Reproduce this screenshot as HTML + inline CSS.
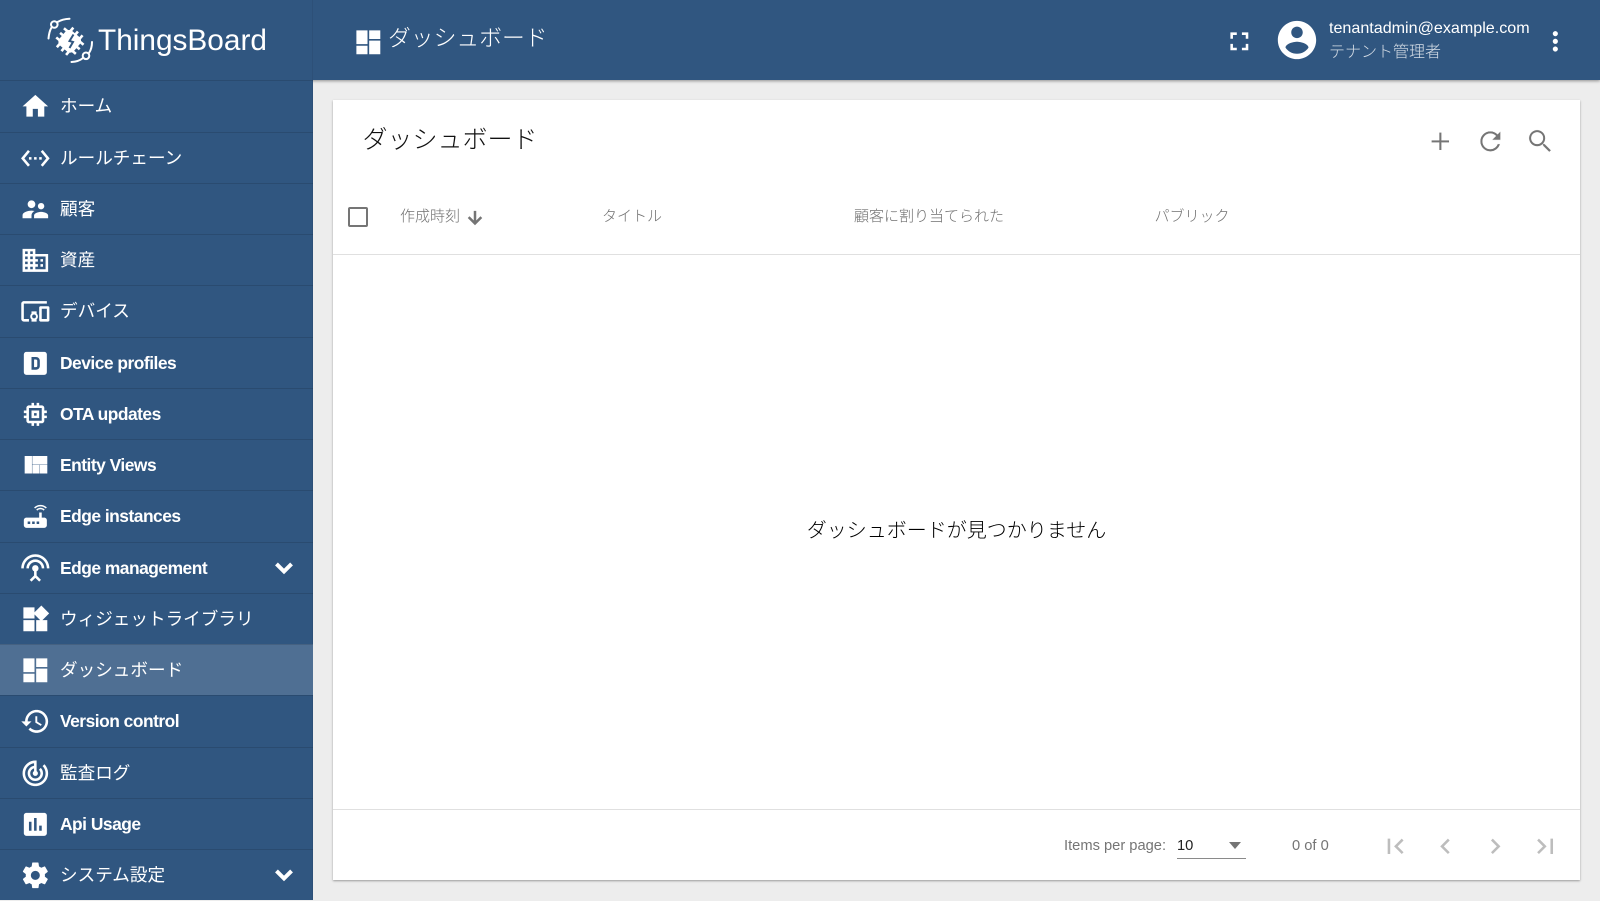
<!DOCTYPE html>
<html lang="ja">
<head>
<meta charset="utf-8">
<title>ダッシュボード</title>
<style>
html,body{margin:0;padding:0;width:1600px;height:900px;overflow:hidden;background:#ededed;font-family:"Liberation Sans","Noto Sans CJK JP",sans-serif;font-weight:300;}
*{box-sizing:border-box;}
svg{display:block;fill:currentColor;}
.abs{position:absolute;}
#top{position:absolute;left:0;top:0;width:1600px;height:80px;background:#305680;box-shadow:0 1px 3px rgba(0,0,0,.4);color:#fff;}
#side{position:absolute;left:0;top:0;width:313px;height:900px;background:#305680;color:#fff;border-right:1px solid rgba(0,0,0,.06);}
.row{position:absolute;left:0;width:313px;height:51px;border-top:1px solid rgba(0,0,0,.12);}
.row svg{position:absolute;left:19.6px;top:10px;width:30.7px;height:30.7px;}
.row span{position:absolute;left:60px;top:0;line-height:51px;font-size:17.6px;white-space:nowrap;font-weight:400;}
.row span.b{font-weight:700;font-size:17.4px;letter-spacing:-.5px;line-height:50.5px;}
.row svg.ch{left:268px;top:9px;width:32px;height:32px;stroke:#fff;stroke-width:1;}
.row svg.f{stroke:#fff;stroke-width:.7;}
.sel{background:#4f6f93;}
#card{position:absolute;left:333px;top:100px;width:1247px;height:780px;background:#fff;box-shadow:0 1px 2px rgba(0,0,0,.35);}
.th{position:absolute;top:207px;line-height:20px;font-size:15px;color:#707070;white-space:nowrap;}
.ic{position:absolute;width:30.7px;height:30.7px;color:#757575;stroke:#fff;stroke-width:.4;}
.pg{position:absolute;top:830.5px;width:30.7px;height:30.7px;color:#bdbdbd;}
</style>
</head>
<body>
<div id="top">
  <svg class="abs" style="left:352.500px;top:27px;width:30.7px;height:30.7px;stroke:#fff;stroke-width:.7" viewBox="0 0 24 24"><path d="M3 13h8V3H3v10zm0 8h8v-6H3v6zm10 0h8V11h-8v10zm0-18v6h8V3h-8z"/></svg>
  <div class="abs" style="left:388px;top:20px;line-height:36px;font-size:22.8px;white-space:nowrap">ダッシュボード</div>
  <svg class="abs" style="left:1224px;top:25.5px;width:30.7px;height:30.7px" viewBox="0 0 24 24"><path d="M7 14H5v5h5v-2H7v-3zm-2-4h2V7h3V5H5v5zm12 7h-3v2h5v-5h-2v3zM14 5v2h3v3h2V5h-5z"/></svg>
  <svg class="abs" style="left:1273.500px;top:17px;width:46px;height:46px" viewBox="0 0 24 24"><path d="M12 2C6.480 2 2 6.480 2 12s4.480 10 10 10 10-4.480 10-10S17.520 2 12 2zm0 3c1.660 0 3 1.340 3 3s-1.340 3-3 3-3-1.340-3-3 1.340-3 3-3zm0 14.200c-2.500 0-4.710-1.280-6-3.220.03-1.990 4-3.080 6-3.080 1.990 0 5.970 1.090 6 3.080-1.290 1.940-3.500 3.220-6 3.220z"/></svg>
  <div class="abs" style="left:1329px;top:17px;line-height:22px;font-size:16.1px;white-space:nowrap;color:#fff">tenantadmin@example.com</div>
  <div class="abs" style="left:1329px;top:41.5px;line-height:22px;font-size:16px;white-space:nowrap;color:rgba(255,255,255,.8)">テナント管理者</div>
  <svg class="abs" style="left:1540px;top:25.5px;width:30.7px;height:30.7px" viewBox="0 0 24 24"><path d="M12 8c1.100 0 2-.9 2-2s-.9-2-2-2-2 .9-2 2 .9 2 2 2zm0 2c-1.100 0-2 .9-2 2s.9 2 2 2 2-.9 2-2-.9-2-2-2zm0 6c-1.100 0-2 .9-2 2s.9 2 2 2 2-.9 2-2-.9-2-2-2z"/></svg>
</div>

<div id="side">
  <svg class="abs" style="left:46px;top:16px;width:48px;height:48px" viewBox="46 16 48 48">
    <g fill="none" stroke="#fff" stroke-width="2" stroke-linecap="round">
      <path d="M48.500 38.500C49 33 50 30 51.500 27.500"/><path d="M57.500 22C61 20 65 19 69.500 18.800"/><circle cx="54.300" cy="24.500" r="3.300"/>
      <path d="M92 42C92 47 91 50 89 53"/><path d="M83 58C80 60.500 76 61.800 71.500 62"/><circle cx="86" cy="55.800" r="3.300"/>
    </g>
    <g transform="rotate(40 69.700 41.300)" fill="#fff">
      <rect x="60.200" y="31.800" width="19" height="19" rx="5"/>
      <rect x="62.400" y="28.500" width="2.600" height="25.600"/><rect x="68.400" y="28.500" width="2.600" height="25.600"/><rect x="74.400" y="28.500" width="2.600" height="25.600"/>
      <rect x="56.900" y="33.700" width="25.600" height="2.600"/><rect x="56.900" y="39.700" width="25.600" height="2.600"/><rect x="56.900" y="45.700" width="25.600" height="2.600"/>
    </g>
    <path d="M73.500 34.500L69.500 41L73 42L69.500 48" fill="none" stroke="#305680" stroke-width="2"/>
  </svg>
  <div class="abs" style="left:98px;top:21px;line-height:40px;font-size:29.8px;white-space:nowrap">ThingsBoard</div>

  <div class="row" style="top:80px"><svg viewBox="0 0 24 24"><path d="M10 20v-6h4v6h5v-8h3L12 3 2 12h3v8z"/></svg><span>ホーム</span></div>
  <div class="row" style="top:132px"><svg viewBox="0 0 24 24"><path d="M7.770 6.760L6.230 5.480.82 12l5.410 6.520 1.540-1.280L3.420 12l4.350-5.240zM7 13h2v-2H7v2zm10-2h-2v2h2v-2zm-6 2h2v-2h-2v2zm6.770-7.520l-1.540 1.280L20.580 12l-4.350 5.240 1.540 1.280L23.180 12l-5.410-6.520z"/></svg><span>ルールチェーン</span></div>
  <div class="row" style="top:183px"><svg viewBox="0 0 24 24"><path d="M16.500 12c1.380 0 2.490-1.120 2.490-2.500S17.880 7 16.500 7C15.120 7 14 8.120 14 9.500s1.120 2.500 2.500 2.500zM9 11c1.660 0 2.990-1.340 2.990-3S10.660 5 9 5C7.340 5 6 6.340 6 8s1.340 3 3 3zm7.500 3c-1.830 0-5.500.92-5.500 2.750V19h11v-2.250c0-1.830-3.670-2.750-5.500-2.750zM9 13c-2.330 0-7 1.170-7 3.500V19h7v-2.250c0-.85.33-2.340 2.370-3.470C10.500 13.100 9.660 13 9 13z"/></svg><span>顧客</span></div>
  <div class="row" style="top:234px"><svg viewBox="0 0 24 24"><path d="M12 7V3H2v18h20V7H12zM6 19H4v-2h2v2zm0-4H4v-2h2v2zm0-4H4V9h2v2zm0-4H4V5h2v2zm4 12H8v-2h2v2zm0-4H8v-2h2v2zm0-4H8V9h2v2zm0-4H8V5h2v2zm10 12h-8v-2h2v-2h-2v-2h2v-2h-2V9h8v10zm-2-8h-2v2h2v-2zm0 4h-2v2h2v-2z"/></svg><span>資産</span></div>
  <div class="row" style="top:285px"><svg viewBox="0 0 24 24"><path d="M3 6h18V4H3c-1.100 0-2 .9-2 2v12c0 1.100.9 2 2 2h4v-2H3V6zm10 6H9v1.780c-.61.55-1 1.330-1 2.220s.39 1.670 1 2.220V20h4v-1.780c.61-.55 1-1.340 1-2.220s-.39-1.670-1-2.220V12zm-2 5.500c-.83 0-1.500-.67-1.500-1.500s.67-1.500 1.500-1.500 1.500.67 1.500 1.500-.67 1.500-1.500 1.500zM22 8h-6c-.5 0-1 .5-1 1v10c0 .5.5 1 1 1h6c.5 0 1-.5 1-1V9c0-.5-.5-1-1-1zm-1 10h-4v-8h4v8z"/></svg><span>デバイス</span></div>
  <div class="row" style="top:337px"><svg viewBox="0 0 24 24"><path fill-rule="evenodd" d="M5 3h14a2 2 0 0 1 2 2v14a2 2 0 0 1-2 2H5a2 2 0 0 1-2-2V5a2 2 0 0 1 2-2zm4 4v10h3.500c1.700 0 3-1.300 3-3v-4c0-1.700-1.300-3-3-3H9zm2 2h1.500c.5 0 1 .4 1 .9v4.200c0 .5-.5.9-1 .9H11V9z"/></svg><span class="b">Device profiles</span></div>
  <div class="row" style="top:388px"><svg viewBox="0 0 24 24"><path d="M15 9H9v6h6V9zm-2 4h-2v-2h2v2zm8-2V9h-2V7c0-1.100-.9-2-2-2h-2V3h-2v2h-2V3H9v2H7c-1.100 0-2 .9-2 2v2H3v2h2v2H3v2h2v2c0 1.100.9 2 2 2h2v2h2v-2h2v2h2v-2h2c1.100 0 2-.9 2-2v-2h2v-2h-2v-2h2zm-4 6H7V7h10v10z"/></svg><span class="b">OTA updates</span></div>
  <div class="row" style="top:439px"><svg class="f" viewBox="0 0 24 24"><path d="M10 18h5v-6h-5v6zm-6 0h5V5H4v13zm12 0h5v-6h-5v6zM10 5v6h11V5H10z"/></svg><span class="b">Entity Views</span></div>
  <div class="row" style="top:490px"><svg viewBox="0 0 24 24"><path d="M20.200 5.900l.8-.8C19.600 3.700 17.800 3 16 3s-3.600.7-5 2.100l.8.8C13 4.800 14.500 4.200 16 4.200s3 .6 4.200 1.700zm-.9.8c-.9-.9-2.100-1.400-3.300-1.400s-2.400.5-3.300 1.400l.8.8c.7-.7 1.600-1 2.500-1 .9 0 1.800.3 2.500 1l.8-.8zM19 13h-2V9h-2v4H5c-1.100 0-2 .9-2 2v4c0 1.100.9 2 2 2h14c1.100 0 2-.9 2-2v-4c0-1.100-.9-2-2-2zM8 18H6v-2h2v2zm3.500 0h-2v-2h2v2zm3.500 0h-2v-2h2v2z"/></svg><span class="b">Edge instances</span></div>
  <div class="row" style="top:542px"><svg viewBox="0 0 24 24"><path d="M12 5c-3.870 0-7 3.130-7 7h2c0-2.760 2.240-5 5-5s5 2.240 5 5h2c0-3.870-3.130-7-7-7zm1 9.290c.88-.39 1.500-1.260 1.500-2.290 0-1.380-1.120-2.500-2.500-2.500S9.500 10.620 9.500 12c0 1.020.62 1.900 1.500 2.290v3.300L7.590 21 9 22.410l3-3 3 3L16.410 21 13 17.590v-3.300zM12 1C5.930 1 1 5.930 1 12h2c0-4.970 4.030-9 9-9s9 4.030 9 9h2c0-6.070-4.930-11-11-11z"/></svg><span class="b">Edge management</span><svg class="ch" viewBox="0 0 24 24"><path d="M16.590 8.590L12 13.170 7.410 8.590 6 10l6 6 6-6z"/></svg></div>
  <div class="row" style="top:593px"><svg class="f" viewBox="0 0 24 24"><path d="M13 13v8h8v-8h-8zM3 21h8v-8H3v8zM3 3v8h8V3H3zm13.660-1.310L11 7.340 16.660 13l5.660-5.660-5.660-5.650z"/></svg><span>ウィジェットライブラリ</span></div>
  <div class="row sel" style="top:644px"><svg class="f" viewBox="0 0 24 24"><path d="M3 13h8V3H3v10zm0 8h8v-6H3v6zm10 0h8V11h-8v10zm0-18v6h8V3h-8z"/></svg><span>ダッシュボード</span></div>
  <div class="row" style="top:695px"><svg viewBox="0 0 24 24"><path d="M13 3c-4.970 0-9 4.030-9 9H1l3.890 3.890.07.14L9 12H6c0-3.870 3.130-7 7-7s7 3.130 7 7-3.130 7-7 7c-1.930 0-3.680-.79-4.940-2.060l-1.420 1.420C8.270 19.990 10.510 21 13 21c4.970 0 9-4.030 9-9s-4.030-9-9-9zm-1 5v5l4.280 2.540.72-1.210-3.500-2.080V8H12z"/></svg><span class="b">Version control</span></div>
  <div class="row" style="top:747px"><svg viewBox="0 0 24 24"><path d="M19.070 4.930l-1.410 1.410C19.100 7.790 20 9.790 20 12c0 4.420-3.580 8-8 8s-8-3.580-8-8c0-4.080 3.050-7.440 7-7.930v2.020C8.160 6.570 6 9.030 6 12c0 3.310 2.690 6 6 6s6-2.690 6-6c0-1.660-.67-3.160-1.760-4.240l-1.410 1.410C15.550 9.900 16 10.900 16 12c0 2.210-1.790 4-4 4s-4-1.790-4-4c0-1.860 1.280-3.410 3-3.860v2.140c-.6.35-1 .98-1 1.720 0 1.100.9 2 2 2s2-.9 2-2c0-.74-.4-1.380-1-1.720V2h-1C6.480 2 2 6.480 2 12s4.480 10 10 10 10-4.480 10-10c0-2.760-1.120-5.260-2.930-7.070z"/></svg><span>監査ログ</span></div>
  <div class="row" style="top:798px"><svg viewBox="0 0 24 24"><path d="M19 3H5c-1.100 0-2 .9-2 2v14c0 1.100.9 2 2 2h14c1.100 0 2-.9 2-2V5c0-1.100-.9-2-2-2zM9 17H7v-7h2v7zm4 0h-2V7h2v10zm4 0h-2v-4h2v4z"/></svg><span class="b">Api Usage</span></div>
  <div class="row" style="top:849px"><svg viewBox="0 0 24 24"><path d="M19.430 12.980c.04-.32.07-.64.07-.98s-.03-.66-.07-.98l2.110-1.650c.19-.15.24-.42.12-.64l-2-3.460c-.12-.22-.39-.3-.61-.22l-2.490 1c-.52-.4-1.080-.73-1.690-.98l-.38-2.650C14.460 2.180 14.250 2 14 2h-4c-.25 0-.46.18-.49.42l-.38 2.650c-.61.25-1.170.59-1.690.98l-2.490-1c-.23-.09-.49 0-.61.22l-2 3.460c-.13.22-.07.49.12.64l2.110 1.650c-.04.32-.07.65-.07.98s.03.66.07.98l-2.110 1.650c-.19.15-.24.42-.12.64l2 3.460c.12.22.39.3.61.22l2.490-1c.52.4 1.080.73 1.690.98l.38 2.650c.03.24.24.42.49.42h4c.25 0 .46-.18.49-.42l.38-2.650c.61-.25 1.170-.59 1.690-.98l2.490 1c.23.09.49 0 .61-.22l2-3.460c.12-.22.07-.49-.12-.64l-2.110-1.650zM12 15.500c-1.930 0-3.500-1.570-3.500-3.500s1.570-3.500 3.500-3.500 3.500 1.570 3.500 3.500-1.570 3.500-3.500 3.500z"/></svg><span>システム設定</span><svg class="ch" viewBox="0 0 24 24"><path d="M16.590 8.590L12 13.170 7.410 8.590 6 10l6 6 6-6z"/></svg></div>
</div>

<div id="card"></div>
<div class="abs" style="left:362.500px;top:121.5px;line-height:36px;font-size:25px;color:#111;white-space:nowrap">ダッシュボード</div>
<svg class="ic" style="left:1425px;top:126px" viewBox="0 0 24 24"><path d="M19 13h-6v6h-2v-6H5v-2h6V5h2v6h6v2z"/></svg>
<svg class="ic" style="left:1475px;top:126px" viewBox="0 0 24 24"><path d="M17.650 6.350C16.200 4.900 14.210 4 12 4c-4.420 0-7.990 3.580-7.990 8s3.570 8 7.990 8c3.730 0 6.840-2.550 7.730-6h-2.080c-.82 2.330-3.040 4-5.650 4-3.310 0-6-2.690-6-6s2.690-6 6-6c1.660 0 3.140.69 4.220 1.780L13 11h7V4l-2.350 2.350z"/></svg>
<svg class="ic" style="left:1525px;top:126px" viewBox="0 0 24 24"><path d="M15.500 14h-.79l-.28-.27C15.410 12.590 16 11.110 16 9.500 16 5.910 13.090 3 9.500 3S3 5.910 3 9.500 5.910 16 9.500 16c1.610 0 3.090-.59 4.230-1.570l.27.28v.79l5 4.990L20.490 19l-4.990-5zm-6 0C7.010 14 5 11.990 5 9.500S7.010 5 9.500 5 14 7.010 14 9.500 11.990 14 9.500 14z"/></svg>

<div class="abs" style="left:348px;top:207px;width:20px;height:20px;border:2px solid #757575;border-radius:2px"></div>
<div class="th" style="left:400px">作成時刻</div>
<svg class="abs" style="left:465px;top:208px;width:20px;height:20px;color:#757575;stroke:#757575;stroke-width:1" viewBox="0 0 24 24"><path d="M20 12l-1.410-1.410L13 16.170V4h-2v12.170l-5.580-5.590L4 12l8 8 8-8z"/></svg>
<div class="th" style="left:602px">タイトル</div>
<div class="th" style="left:854px">顧客に割り当てられた</div>
<div class="th" style="left:1154.500px">パブリック</div>
<div class="abs" style="left:333px;top:254px;width:1247px;height:1px;background:#e0e0e0"></div>

<div class="abs" style="left:333px;top:516px;width:1247px;text-align:center;line-height:30px;font-size:20px;color:#000">ダッシュボードが見つかりません</div>

<div class="abs" style="left:333px;top:809px;width:1247px;height:1px;background:#e0e0e0"></div>
<div class="abs" style="left:1064px;top:836px;line-height:20px;font-size:14.700px;color:#757575;white-space:nowrap">Items per page:</div>
<div class="abs" style="left:1177px;top:836px;line-height:20px;font-size:14.700px;color:#212121">10</div>
<div class="abs" style="left:1177px;top:858px;width:69px;height:1px;background:#8a8a8a"></div>
<div class="abs" style="left:1229px;top:842px;width:0;height:0;border-left:6.500px solid transparent;border-right:6.500px solid transparent;border-top:7px solid #757575"></div>
<div class="abs" style="left:1292px;top:836px;line-height:20px;font-size:14.700px;color:#757575;white-space:nowrap">0 of 0</div>
<svg class="pg" style="left:1380px" viewBox="0 0 24 24"><path d="M18.410 16.590L13.820 12l4.590-4.590L17 6l-6 6 6 6zM6 6h2v12H6z"/></svg>
<svg class="pg" style="left:1430px" viewBox="0 0 24 24"><path d="M15.410 7.410L14 6l-6 6 6 6 1.410-1.410L10.830 12z"/></svg>
<svg class="pg" style="left:1480px" viewBox="0 0 24 24"><path d="M10 6L8.590 7.410 13.170 12l-4.580 4.590L10 18l6-6z"/></svg>
<svg class="pg" style="left:1530px" viewBox="0 0 24 24"><path d="M5.590 7.410L10.180 12l-4.590 4.590L7 18l6-6-6-6zM16 6h2v12h-2z"/></svg>
</body>
</html>
